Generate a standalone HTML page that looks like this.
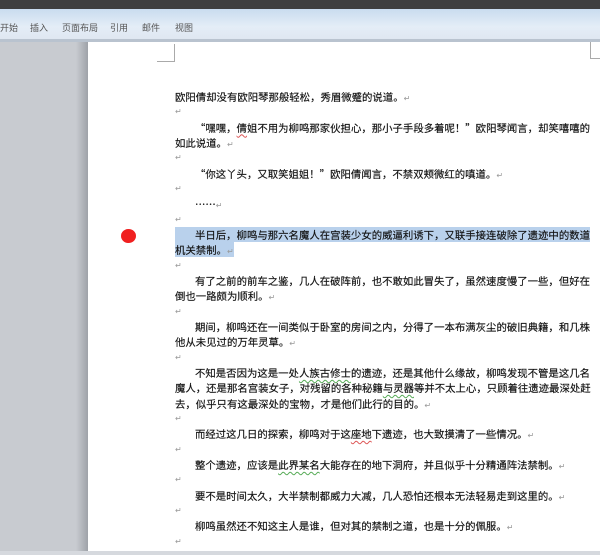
<!DOCTYPE html>
<html><head><meta charset="utf-8"><style>
body{margin:0;width:600px;height:555px;overflow:hidden;background:#c9ccd1;font-family:"Liberation Sans","Noto Sans CJK SC",sans-serif;position:relative}
.title{position:absolute;left:0;top:0;width:600px;height:9px;background:#3f3f3f}
.rib{position:absolute;left:0;top:9px;width:600px;height:30px;background:linear-gradient(#c9dcef,#e4edf7 60%,#dfe7f1)}
.rib span{position:absolute;top:12px;font-size:9px;color:#555}
.ribline{position:absolute;left:0;top:39px;width:600px;height:3px;background:#b9c3cf}
.left{position:absolute;left:0;top:42px;width:88px;height:513px;background:linear-gradient(90deg,#c8cbd0 0,#c8cbd0 76px,#9ea2a8 88px)}
.page{position:absolute;left:88px;top:42px;width:512px;height:509px;background:#fff}
.bot{position:absolute;left:0;top:551px;width:600px;height:4px;background:#d6d9de}
.c1{position:absolute;left:157px;top:44px;width:17px;height:17px;border-right:1px solid #aaa;border-bottom:1px solid #aaa}
.c2{position:absolute;left:590px;top:42px;width:10px;height:16px;border-left:1px solid #aaa;border-bottom:1px solid #aaa}
.txt{position:absolute;left:175px;top:89px;width:415px;font-family:"Noto Sans CJK SC",sans-serif;font-size:10.4px;line-height:15.33px;color:#111;-webkit-text-stroke:0.15px #111}
.txt div{white-space:nowrap;height:15.33px}
.j{text-align:justify;text-align-last:justify}
.i{padding-left:20px}
.r{color:#999;font-size:8px;-webkit-text-stroke:0}
.hl{background:#b9d1ec}
.red{position:absolute;left:121px;top:229px;width:15px;height:14px;border-radius:50%;background:#f02020}
.g{text-decoration:underline wavy #5a5;text-decoration-thickness:1px;text-underline-offset:2px}
.rd{text-decoration:underline wavy #d55;text-decoration-thickness:1px;text-underline-offset:2px}
</style></head><body>
<div class="title"></div>
<div class="rib"><span style="left:0">开始</span><span style="left:30px">插入</span><span style="left:62px">页面布局</span><span style="left:110px">引用</span><span style="left:142px">邮件</span><span style="left:175px">视图</span></div>
<div class="ribline"></div>
<div class="left"></div>
<div class="page"></div>
<div class="bot"></div>
<div class="c1"></div><div class="c2"></div>
<div class="red"></div>
<div class="txt">
<div>欧阳倩却没有欧阳琴那般轻松，秀眉微蹙的说道。<span class="r">↵</span></div>
<div class="r">↵</div>
<div class="j i">“嘿嘿，<span class="rd">倩</span>姐不用为柳鸣那家伙担心，那小子手段多着呢！”欧阳琴闻言，却笑嘻嘻的</div>
<div>如此说道。<span class="r">↵</span></div>
<div class="r">↵</div>
<div class="i">“你这丫头，又取笑姐姐！”欧阳倩闻言，不禁双颊微红的嗔道。<span class="r">↵</span></div>
<div class="r">↵</div>
<div class="i">……<span class="r">↵</span></div>
<div class="r">↵</div>
<div class="j i hl">半日后，柳鸣与那六名魔人在宫装少女的威逼利诱下，又联手接连破除了遗迹中的数道</div>
<div><span class="hl">机关禁制。<span class="r">↵</span></span></div>
<div class="r">↵</div>
<div class="j i">有了之前的前车之鉴，几人在破阵前，也不敢如此冒失了，虽然速度慢了一些，但好在</div>
<div>倒也一路颇为顺利。<span class="r">↵</span></div>
<div class="r">↵</div>
<div class="j i">期间，柳鸣还在一间类似于卧室的房间之内，分得了一本布满灰尘的破旧典籍，和几株</div>
<div>他从未见过的万年灵草。<span class="r">↵</span></div>
<div class="r">↵</div>
<div class="j i">不知是否因为这是一处<span class="g">人族古修士</span>的遗迹，还是其他什么缘故，柳鸣发现不管是这几名</div>
<div class="j">魔人，还是那名宫装女子，对残留的各种秘籍<span class="g">与灵器</span>等并不太上心，只顾着往遗迹最深处赶</div>
<div>去，似乎只有这最深处的宝物，才是他们此行的目的。<span class="r">↵</span></div>
<div class="r">↵</div>
<div class="i">而经过这几日的探索，柳鸣对于这<span class="rd">座地</span>下遗迹，也大致摸清了一些情况。<span class="r">↵</span></div>
<div class="r">↵</div>
<div class="i">整个遗迹，应该是<span class="g">此界某名</span>大能存在的地下洞府，并且似乎十分精通阵法禁制。<span class="r">↵</span></div>
<div class="r">↵</div>
<div class="i">要不是时间太久，大半禁制都威力大减，几人恐怕还根本无法轻易走到这里的。<span class="r">↵</span></div>
<div class="r">↵</div>
<div class="i">柳鸣虽然还不知这主人是谁，但对其的禁制之道，也是十分的佩服。<span class="r">↵</span></div>
<div class="r">↵</div>
</div>
</body></html>
